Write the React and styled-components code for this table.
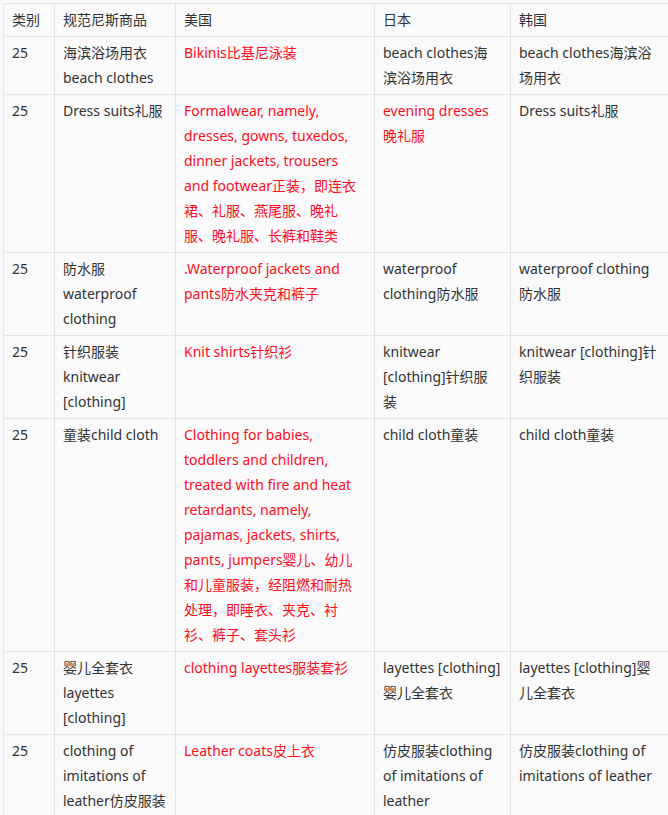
import React from "react";
import styled, { createGlobalStyle } from "styled-components";

const Global = createGlobalStyle`
  html, body { margin: 0; padding: 0; background: #fafafa; overflow: hidden; }
  body { font-family: "Noto Sans", "Noto Sans CJK SC", sans-serif; }
`;

const Page = styled.div`
  padding: 3px 0 0 3px;
  width: 668px;
  height: 815px;
  box-sizing: border-box;
  overflow: hidden;
`;

const Table = styled.table`
  border-collapse: collapse;
  table-layout: fixed;
  width: 666px;
  font-size: 14px;
  line-height: 25px;
  color: #333;
`;

const Cell = styled.td`
  border: 1px solid #e5e5e5;
  padding: 3px ${(p) => p.$pr}px 4px 8px;
  vertical-align: top;
  text-align: left;
  font-weight: 400;
  word-wrap: break-word;
  color: ${(p) => (p.$red ? "#ff0d1f" : "#333")};
`;

const Head = styled(Cell).attrs({ as: "th" })``;

const columns = [
  { width: 51, pr: 8 },
  { width: 121, pr: 8 },
  { width: 199, pr: 10 },
  { width: 136, pr: 9 },
  { width: 159, pr: 8 },
];

const header = ["类别", "规范尼斯商品", "美国", "日本", "韩国"];

const rows = [
  ["25", "海滨浴场用衣 beach clothes", "Bikinis比基尼泳装", "beach clothes海滨浴场用衣", "beach clothes海滨浴场用衣"],
  ["25", "Dress suits礼服", "Formalwear, namely, dresses, gowns, tuxedos, dinner jackets, trousers and footwear正装，即连衣裙、礼服、燕尾服、晚礼服、晚礼服、长裤和鞋类", "evening dresses晚礼服", "Dress suits礼服", [3]],
  ["25", "防水服 waterproof clothing", ".Waterproof jackets and pants防水夹克和裤子", "waterproof clothing防水服", "waterproof clothing防水服"],
  ["25", "针织服装 knitwear [clothing]", "Knit shirts针织衫", "knitwear [clothing]针织服装", "knitwear [clothing]针织服装"],
  ["25", "童装child cloth", "Clothing for babies, toddlers and children, treated with fire and heat retardants, namely, pajamas, jackets, shirts, pants, jumpers婴儿、幼儿和儿童服装，经阻燃和耐热处理，即睡衣、夹克、衬衫、裤子、套头衫", "child cloth童装", "child cloth童装"],
  ["25", "婴儿全套衣 layettes [clothing]", "clothing layettes服装套衫", "layettes [clothing]婴儿全套衣", "layettes [clothing]婴儿全套衣"],
  ["25", "clothing of imitations of leather仿皮服装", "Leather coats皮上衣", "仿皮服装clothing of imitations of leather", "仿皮服装clothing of imitations of leather"],
];

export default function App() {
  return (
    <Page>
      <Global />
      <Table>
        <colgroup>
          {columns.map((c, i) => (
            <col key={i} style={{ width: c.width }} />
          ))}
        </colgroup>
        <thead>
          <tr>
            {header.map((h, i) => (
              <Head key={h} $pr={columns[i].pr}>
                {h}
              </Head>
            ))}
          </tr>
        </thead>
        <tbody>
          {rows.map((r, ri) => {
            const extraRed = r[5] || [];
            return (
              <tr key={ri}>
                {r.slice(0, 5).map((c, ci) => (
                  <Cell
                    key={ci}
                    $pr={columns[ci].pr}
                    $red={ci === 2 || extraRed.includes(ci)}
                  >
                    {c}
                  </Cell>
                ))}
              </tr>
            );
          })}
        </tbody>
      </Table>
    </Page>
  );
}
